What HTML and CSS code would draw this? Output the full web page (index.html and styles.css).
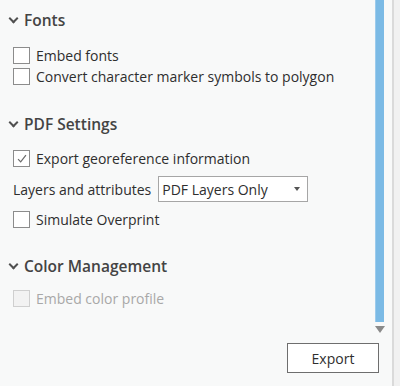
FILE: index.html
```html
<!DOCTYPE html>
<html>
<head>
<meta charset="utf-8">
<link rel="stylesheet" href="styles.css">
</head>
<body>
<div class="panel">
  <div class="scroll-area">
    <div class="content">
      <section class="group group-fonts">
        <div class="header"><span class="chev"></span>Fonts</div>
        <div class="items">
          <label class="row"><span class="box"></span>Embed fonts</label>
          <label class="row"><span class="box"></span>Convert character marker symbols to polygon</label>
        </div>
      </section>
      <section class="group group-pdf">
        <div class="header"><span class="chev"></span>PDF Settings</div>
        <div class="items">
          <label class="row"><span class="box checked"><svg viewBox="0 0 16 16" width="14" height="14"><path d="M3.5 8.2 L6.5 11.3 L12.5 3.5" fill="none" stroke="#6a6a6a" stroke-width="1.4"/></svg></span>Export georeference information</label>
          <div class="row select-row">
            <span class="select-label">Layers and attributes</span>
            <div class="select"><span>PDF Layers Only</span><span class="caret"></span></div>
          </div>
          <label class="row"><span class="box"></span>Simulate Overprint</label>
        </div>
      </section>
      <section class="group group-color">
        <div class="header"><span class="chev"></span>Color Management</div>
        <div class="items">
          <label class="row disabled"><span class="box"></span>Embed color profile</label>
        </div>
      </section>
    </div>
    <div class="scrollbar">
      <div class="thumb"></div>
      <div class="arrow"></div>
    </div>
  </div>
  <div class="footer">
    <button class="btn">Export</button>
  </div>
</div>
<div class="edge"></div>
</body>
</html>
```
FILE: styles.css
```css
html, body {
  margin: 0;
  padding: 0;
}
body {
  width: 400px;
  height: 386px;
  background: #f8f9f9;
  font-family: "Open Sans", "Noto Sans", sans-serif;
  color: #2e2e2e;
  display: flex;
  overflow: hidden;
}
.panel {
  flex: 1;
  display: flex;
  flex-direction: column;
}
.scroll-area {
  display: flex;
  height: 336px;
}
.content {
  flex: 1;
  padding-left: 9px;
}
.group-fonts { margin-top: 8px; }
.group-pdf { margin-top: 25px; }
.group-color { margin-top: 24px; }
.header {
  height: 24px;
  display: flex;
  align-items: center;
  font-size: 15.5px;
  font-weight: 600;
  color: #444444;
}
.chev {
  width: 5px;
  height: 5px;
  border-right: 2px solid #505050;
  border-bottom: 2px solid #505050;
  transform: rotate(45deg);
  margin: -4px 7px 0 1px;
}
.group-fonts .items { margin-top: 13px; }
.group-pdf .items { margin-top: 12px; }
.group-color .items { margin-top: 10px; }
.row {
  height: 21px;
  display: flex;
  align-items: center;
  font-size: 14px;
  margin-left: 4px;
}
.box {
  width: 15px;
  height: 15px;
  border: 1px solid #8c8c8c;
  background: #ffffff;
  margin-right: 6px;
  display: flex;
  align-items: center;
  justify-content: center;
}
.select-row {
  height: 26px;
  margin-top: 7px;
  margin-bottom: 7px;
}
.select-label {
  margin-right: 7px;
}
.select {
  width: 150px;
  height: 26px;
  border: 1px solid #a6a6a6;
  background: #ffffff;
  display: flex;
  align-items: center;
  justify-content: space-between;
  padding: 0 7px 0 3px;
  box-sizing: border-box;
}
.caret {
  width: 0;
  height: 0;
  border-left: 3px solid transparent;
  border-right: 3px solid transparent;
  border-top: 4px solid #555;
}
.disabled {
  color: #a8a8a8;
}
.disabled .box {
  border-color: #cfcfcf;
  background: #f2f2f2;
}
.scrollbar {
  width: 17px;
  display: flex;
  flex-direction: column;
}
.thumb {
  width: 9px;
  height: 322px;
  background: #7bbae5;
  border-left: 1px solid #9ccbec;
  box-sizing: border-box;
}
.arrow {
  margin-top: 4px;
  width: 0;
  height: 0;
  border-left: 5px solid transparent;
  border-right: 5px solid transparent;
  border-top: 7px solid #8a8a8a;
}
.footer {
  display: flex;
  justify-content: flex-end;
  padding: 7px 13px 0 0;
}
.btn {
  width: 92px;
  height: 30px;
  border: 1px solid #6e6e6e;
  background: #ffffff;
  font-family: "Open Sans", "Noto Sans", sans-serif;
  font-size: 14px;
  color: #2e2e2e;
  padding: 0;
}
.edge {
  width: 6px;
  border-left: 2px solid #dadada;
  background: #f1f1f1;
}
```
